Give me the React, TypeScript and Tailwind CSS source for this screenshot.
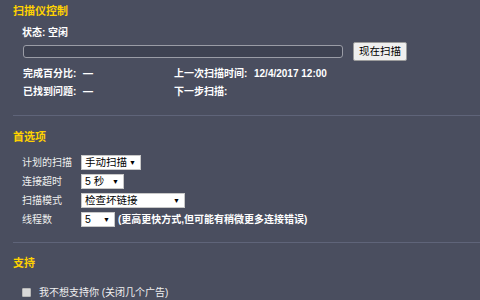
import React from "react";

const font = { fontFamily: '"Liberation Sans", "Noto Sans CJK SC", sans-serif' };

function Sel({ w, text }: { w: string; text: string }) {
  return (
    <div className={`${w} h-[15px] bg-white border border-[#c8c8c8] flex items-center justify-between pl-[3px] pr-[4px] text-[10.5px] leading-[15px] text-black`}>
      <span>{text}</span>
      <span className="text-[7px] leading-[15px]">▼</span>
    </div>
  );
}

export default function App() {
  return (
    <div className="w-[480px] h-[300px] overflow-hidden bg-[#4a4e5f] text-white" style={font}>
      <div className="pt-[4px] pl-[13px]">
        <div className="h-[14px] leading-[14px] text-[11px] font-bold text-[#ffd200]">扫描仪控制</div>
        <div className="pl-[9px] mt-[8px] h-[14px] leading-[14px] text-[10px] font-bold">状态: 空闲</div>
        <div className="pl-[10px] mt-[2px] flex items-center gap-[10px]">
          <div className="w-[320px] h-[13px] rounded-[3px] border border-[#9a9ca6] bg-[#3e4252]"></div>
          <div className="w-[54px] h-[19px] rounded-[2px] border border-[#9c9c9c] bg-[#efefef] text-black text-[10.5px] leading-[17px] text-center">现在扫描</div>
        </div>
        <div className="pl-[10px] mt-[6px] flex h-[14px] leading-[14px] text-[10px] font-bold">
          <div className="w-[60px]">完成百分比:</div>
          <div className="w-[91px]">—</div>
          <div className="w-[80px]">上一次扫描时间:</div>
          <div>12/4/2017 12:00</div>
        </div>
        <div className="pl-[10px] mt-[4px] flex h-[14px] leading-[14px] text-[10px] font-bold">
          <div className="w-[60px]">已找到问题:</div>
          <div className="w-[91px]">—</div>
          <div className="w-[80px]">下一步扫描:</div>
        </div>
        <div className="mt-[16px] h-px bg-[#5f6479]"></div>

        <div className="mt-[14px] h-[14px] leading-[14px] text-[11px] font-bold text-[#ffd200]">首选项</div>
        <div className="pl-[9px] mt-[11px] flex flex-col gap-[4px] text-[10px]">
          <div className="flex items-center h-[15px]">
            <div className="w-[59px] text-[#eeeeee]">计划的扫描</div>
            <Sel w="w-[60px]" text="手动扫描" />
          </div>
          <div className="flex items-center h-[15px]">
            <div className="w-[59px] text-[#eeeeee]">连接超时</div>
            <Sel w="w-[43px]" text="5 秒" />
          </div>
          <div className="flex items-center h-[15px]">
            <div className="w-[59px] text-[#eeeeee]">扫描模式</div>
            <Sel w="w-[104px]" text="检查坏链接" />
          </div>
          <div className="flex items-center h-[15px]">
            <div className="w-[59px] text-[#eeeeee]">线程数</div>
            <Sel w="w-[34px]" text="5" />
            <div className="ml-[3px] font-bold">(更高更快方式,但可能有稍微更多连接错误)</div>
          </div>
        </div>
        <div className="mt-[15px] h-px bg-[#5f6479]"></div>

        <div className="mt-[13px] h-[14px] leading-[14px] text-[11px] font-bold text-[#ffd200]">支持</div>
        <div className="pl-[9px] mt-[15px] flex items-center h-[14px] text-[10px]">
          <div className="w-[9px] h-[9px] rounded-[1px] bg-[#d9d9d9] border border-[#b8b8b8]"></div>
          <div className="ml-[8px] text-[#f0f0f0]">我不想支持你 (关闭几个广告)</div>
        </div>
      </div>
    </div>
  );
}
